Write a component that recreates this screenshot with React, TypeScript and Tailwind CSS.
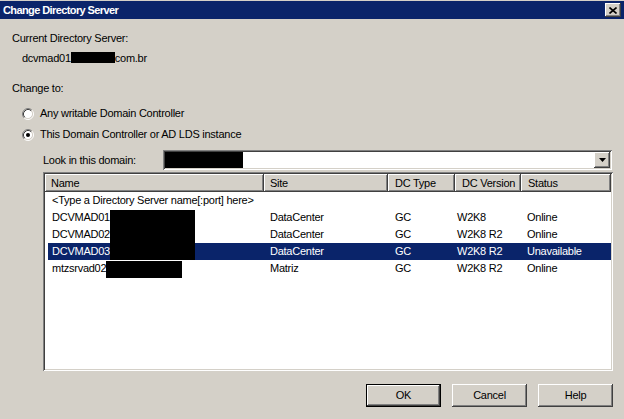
import React from 'react';

const raised =
  'shadow-[inset_-1px_-1px_0_#404040,inset_1px_1px_0_#ffffff,inset_-2px_-2px_0_#808080,inset_2px_2px_0_#d4d0c8]';
const sunken =
  'shadow-[inset_1px_1px_0_#808080,inset_-1px_-1px_0_#ffffff,inset_2px_2px_0_#404040,inset_-2px_-2px_0_#d4d0c8]';
const headerBevel =
  'shadow-[inset_-1px_-1px_0_#404040,inset_1px_1px_0_#ffffff,inset_-2px_-2px_0_#808080]';

const Radio: React.FC<{ checked?: boolean }> = ({ checked }) => (
  <svg width="12" height="12" viewBox="0 0 12 12" className="shrink-0">
    <circle cx="6" cy="6" r="4.5" fill="#ffffff" />
    <path d="M2.11 9.89 A5.5 5.5 0 0 1 9.89 2.11" fill="none" stroke="#808080" strokeWidth="1" />
    <path d="M9.89 2.11 A5.5 5.5 0 0 1 2.11 9.89" fill="none" stroke="#ffffff" strokeWidth="1" />
    <path d="M2.82 9.18 A4.5 4.5 0 0 1 9.18 2.82" fill="none" stroke="#404040" strokeWidth="1" />
    <path d="M9.18 2.82 A4.5 4.5 0 0 1 2.82 9.18" fill="none" stroke="#d4d0c8" strokeWidth="1" />
    {checked && <circle cx="6" cy="6" r="2" fill="#000000" />}
  </svg>
);

type Row = { name: string; site: string; type: string; version: string; status: string };

const rows: Row[] = [
  { name: '<Type a Directory Server name[:port] here>', site: '', type: '', version: '', status: '' },
  { name: 'DCVMAD01', site: 'DataCenter', type: 'GC', version: 'W2K8', status: 'Online' },
  { name: 'DCVMAD02', site: 'DataCenter', type: 'GC', version: 'W2K8 R2', status: 'Online' },
  { name: 'DCVMAD03', site: 'DataCenter', type: 'GC', version: 'W2K8 R2', status: 'Unavailable' },
  { name: 'mtzsrvad02', site: 'Matriz', type: 'GC', version: 'W2K8 R2', status: 'Online' },
];

const Button: React.FC<{ label: string; primary?: boolean }> = ({ label, primary }) => (
  <div className={`w-[75px] h-[23px] ${primary ? 'border border-black' : ''}`}>
    <div className={`h-full flex items-center justify-center bg-[#d4d0c8] ${raised}`}>{label}</div>
  </div>
);

export default function App() {
  return (
    <div className="w-[624px] h-[419px] bg-[#d4d0c8] overflow-hidden text-[11px] leading-[13px] text-black tracking-[-0.25px] font-['Liberation_Sans',Arial,sans-serif]">
      {/* Title bar */}
      <div className="mt-[1px] h-[18px] bg-[#0a246a] flex items-center justify-between pl-[3px] pr-[3px]">
        <span className="text-white font-bold text-[11px] tracking-[-0.6px]">Change Directory Server</span>
        <div className={`w-[16px] h-[14px] bg-[#d4d0c8] flex items-center justify-center ${raised}`}>
          <svg width="8" height="7" viewBox="0 0 8 7">
            <path d="M0.5 0.5 L7.5 6.5 M7.5 0.5 L0.5 6.5" stroke="#000" strokeWidth="1.6" />
          </svg>
        </div>
      </div>

      <div className="mt-[13px] pl-[12px]">Current Directory Server:</div>
      <div className="mt-[7px] pl-[22px]">
        dcvmad01
        <span className="inline-block align-top w-[44px] h-[11px] bg-black" />
        com.br
      </div>

      <div className="mt-[17px] pl-[12px]">Change to:</div>

      <div className="mt-[12px] pl-[22px] flex items-center gap-[6px]">
        <Radio />
        <span>Any writable Domain Controller</span>
      </div>
      <div className="mt-[8px] pl-[22px] flex items-center gap-[6px]">
        <Radio checked />
        <span>This Domain Controller or AD LDS instance</span>
      </div>

      {/* Domain combo */}
      <div className="mt-[9px] pl-[43px] flex items-center">
        <span className="w-[120px]">Look in this domain:</span>
        <div className={`w-[449px] h-[20px] bg-white flex items-stretch p-[2px] ${sunken}`}>
          <div className="w-[78px] bg-black" />
          <div className="flex-1" />
          <div className={`w-[16px] bg-[#d4d0c8] flex items-center justify-center ${raised}`}>
            <svg width="7" height="4" viewBox="0 0 7 4">
              <path d="M0 0 H7 L3.5 4 Z" fill="#000" />
            </svg>
          </div>
        </div>
      </div>

      {/* Server list */}
      <div className={`relative mt-[2px] ml-[43px] w-[570px] h-[199px] bg-white p-[2px] ${sunken}`}>
        <div className="flex h-[18px] bg-[#d4d0c8] leading-[18px]">
          <div className={`w-[219px] pl-[6px] ${headerBevel}`}>Name</div>
          <div className={`w-[124px] pl-[6px] ${headerBevel}`}>Site</div>
          <div className={`w-[67px] pl-[7px] ${headerBevel}`}>DC Type</div>
          <div className={`w-[66px] pl-[7px] ${headerBevel}`}>DC Version</div>
          <div className={`w-[90px] pl-[7px] ${headerBevel}`}>Status</div>
        </div>
        {rows.map((r, i) => {
          const sel = i === 3;
          return (
            <div
              key={i}
              className={`ml-[3px] w-[563px] h-[17px] flex items-center whitespace-nowrap ${
                sel ? 'bg-[#0a246a] text-white' : ''
              }`}
            >
              <div className="w-[216px] pl-[4px]">{r.name}</div>
              <div className="w-[124px] pl-[6px]">{r.site}</div>
              <div className="w-[67px] pl-[7px]">{r.type}</div>
              <div className="w-[66px] pl-[2px]">{r.version}</div>
              <div className="w-[90px] pl-[6px]">{r.status}</div>
            </div>
          );
        })}
        {/* redactions */}
        <div className="absolute left-[67px] top-[38px] w-[85px] h-[50px] bg-black" />
        <div className="absolute left-[63px] top-[89px] w-[76px] h-[17px] bg-black" />
      </div>

      {/* Buttons */}
      <div className="mt-[13px] pr-[11px] flex justify-end gap-[11px]">
        <Button label="OK" primary />
        <Button label="Cancel" />
        <Button label="Help" />
      </div>
    </div>
  );
}
